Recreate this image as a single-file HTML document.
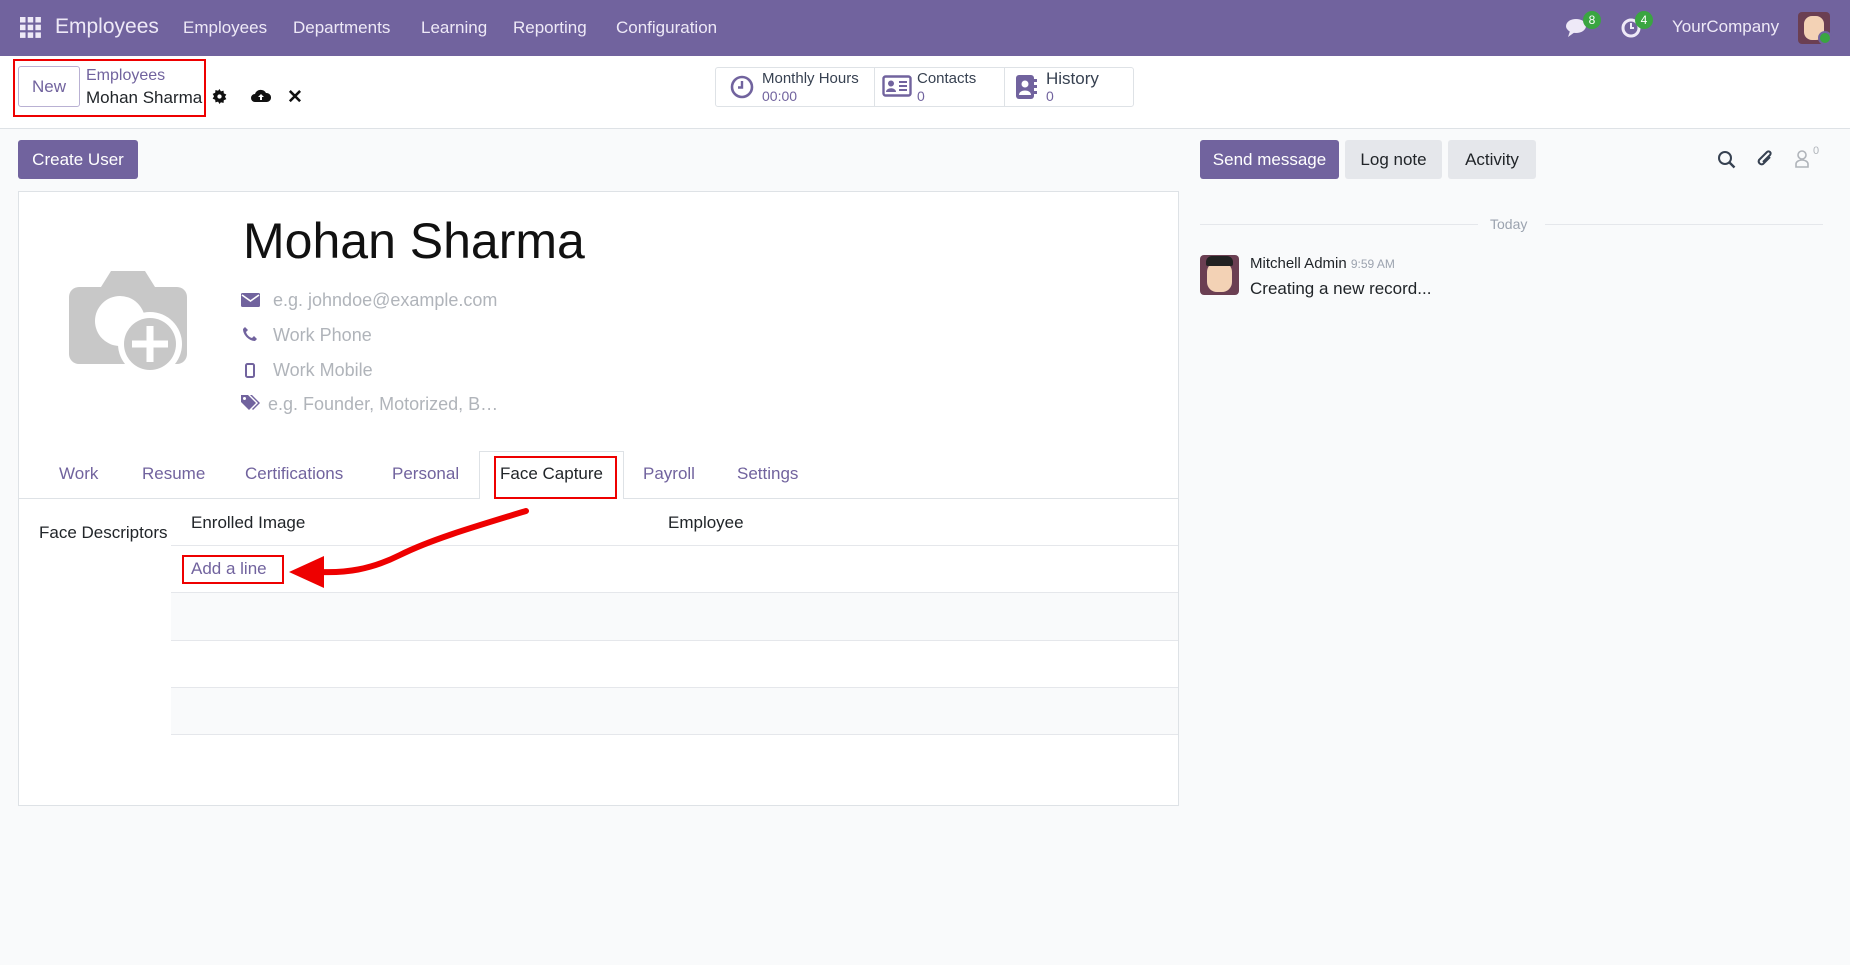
<!DOCTYPE html>
<html><head><meta charset="utf-8"><style>
*{box-sizing:border-box;margin:0;padding:0}
body{width:1850px;height:965px;overflow:hidden;background:#f9fafb;font-family:"Liberation Sans",sans-serif;color:#374151;position:relative}
.a{position:absolute;white-space:nowrap}
.nav{left:0;top:0;width:1850px;height:56px;background:#71639e}
.cp{left:0;top:56px;width:1850px;height:73px;background:#fff;border-bottom:1px solid #dee2e6}
.btn{border-radius:3px;font-size:17px;text-align:center;line-height:39px}
.muted{color:#b0b4ba;font-size:18px}
.tab{font-size:17px;color:#71639e;top:464px}
.hl{height:1px;background:#e5e7eb}
.purple{color:#71639e}
</style></head><body>
<div class="a nav"></div>
<svg class="a" style="left:20px;top:17px" width="21" height="21" viewBox="0 0 21 21" fill="#eee9f7"><rect x="0" y="0" width="5.5" height="5.5"/><rect x="7.7" y="0" width="5.5" height="5.5"/><rect x="15.4" y="0" width="5.5" height="5.5"/><rect x="0" y="7.7" width="5.5" height="5.5"/><rect x="7.7" y="7.7" width="5.5" height="5.5"/><rect x="15.4" y="7.7" width="5.5" height="5.5"/><rect x="0" y="15.4" width="5.5" height="5.5"/><rect x="7.7" y="15.4" width="5.5" height="5.5"/><rect x="15.4" y="15.4" width="5.5" height="5.5"/></svg>
<div class="a" style="left:55px;top:15px;font-size:21px;color:#eee9f7">Employees</div>
<div class="a" style="left:183px;top:18px;color:#eee9f7;font-size:17px">Employees</div>
<div class="a" style="left:293px;top:18px;color:#eee9f7;font-size:17px">Departments</div>
<div class="a" style="left:421px;top:18px;color:#eee9f7;font-size:17px">Learning</div>
<div class="a" style="left:513px;top:18px;color:#eee9f7;font-size:17px">Reporting</div>
<div class="a" style="left:616px;top:18px;color:#eee9f7;font-size:17px">Configuration</div>
<svg class="a" style="left:1565px;top:16px" width="26" height="22" viewBox="0 0 26 22"><ellipse cx="11" cy="10" rx="10" ry="7" fill="#eee9f7"/><path d="M5 15 L3 21 L10 16Z" fill="#eee9f7"/></svg>
<div class="a" style="left:1583px;top:11px;width:18px;height:18px;border-radius:9px;background:#3aa541;color:#fff;font-size:12px;text-align:center;line-height:18px">8</div>
<svg class="a" style="left:1620px;top:17px" width="22" height="22" viewBox="0 0 22 22"><circle cx="11" cy="11" r="8" fill="none" stroke="#eee9f7" stroke-width="3"/><path d="M11 6v5h3" stroke="#eee9f7" stroke-width="2" fill="none"/></svg>
<div class="a" style="left:1635px;top:11px;width:18px;height:18px;border-radius:9px;background:#3aa541;color:#fff;font-size:12px;text-align:center;line-height:18px">4</div>
<div class="a" style="left:1672px;top:17px;color:#eee9f7;font-size:17px">YourCompany</div>
<div class="a" style="left:1798px;top:12px;width:32px;height:32px;border-radius:4px;background:#6b3f52"></div>
<div class="a" style="left:1804px;top:16px;width:20px;height:24px;border-radius:8px;background:#f3d2b5"></div>
<div class="a" style="left:1818px;top:31px;width:14px;height:14px;border-radius:7px;background:#3aa541;border:2px solid #71639e"></div>

<div class="a cp"></div>
<div class="a" style="left:13px;top:59px;width:193px;height:58px;border:2px solid #e00"></div>
<div class="a btn" style="left:18px;top:66px;width:62px;height:41px;border:1px solid #b9b1d3;color:#71639e;line-height:39px">New</div>
<div class="a purple" style="left:86px;top:67px;font-size:16px">Employees</div>
<div class="a" style="left:86px;top:88px;font-size:17px;color:#212529">Mohan Sharma</div>
<svg class="a" style="left:212px;top:89px" width="15" height="15" viewBox="0 0 16 16"><path d="M8 0l1.5 2.5 2.8-.8.3 2.9 2.7 1.2-1.5 2.5 1.5 2.5-2.7 1.2-.3 2.9-2.8-.8L8 16l-1.5-2.5-2.8.8-.3-2.9L.7 10.2 2.2 7.7.7 5.2l2.7-1.2.3-2.9 2.8.8Z" fill="#111"/><circle cx="8" cy="8" r="2.3" fill="#fff"/></svg>
<svg class="a" style="left:251px;top:89px" width="20" height="14" viewBox="0 0 20 14"><path d="M4 13 a4 4 0 0 1 0-8 a6 6 0 0 1 11-1 a4.5 4.5 0 0 1 1 9Z" fill="#111"/><path d="M10 5 l-3 3h2v3h2v-3h2Z" fill="#fff"/></svg>
<div class="a" style="left:287px;top:86px;font-size:19px;font-weight:bold;color:#111">✕</div>

<div class="a" style="left:715px;top:67px;width:419px;height:40px;border:1px solid #dee2e6;border-radius:3px;background:#fff"></div>
<div class="a" style="left:874px;top:68px;width:1px;height:38px;background:#dee2e6"></div>
<div class="a" style="left:1004px;top:68px;width:1px;height:38px;background:#dee2e6"></div>
<svg class="a" style="left:730px;top:75px" width="24" height="24" viewBox="0 0 24 24"><circle cx="12" cy="12" r="10" fill="none" stroke="#71639e" stroke-width="2.6"/><path d="M12 6v6.5h-4" stroke="#71639e" stroke-width="2.4" fill="none"/></svg>
<div class="a" style="left:762px;top:70px;font-size:15px;color:#374151">Monthly Hours</div>
<div class="a purple" style="left:762px;top:88px;font-size:14px">00:00</div>
<svg class="a" style="left:882px;top:75px" width="30" height="24" viewBox="0 0 30 24"><rect x="1.5" y="1.5" width="27" height="19" rx="2" fill="none" stroke="#71639e" stroke-width="2.4"/><circle cx="9" cy="8.5" r="3" fill="#71639e"/><path d="M4 17c0-5 10-5 10 0Z" fill="#71639e"/><path d="M17 7h8M17 11h8M17 15h8" stroke="#71639e" stroke-width="2"/></svg>
<div class="a" style="left:917px;top:70px;font-size:15px;color:#374151">Contacts</div>
<div class="a purple" style="left:917px;top:88px;font-size:14px">0</div>
<svg class="a" style="left:1014px;top:74px" width="24" height="26" viewBox="0 0 24 26"><rect x="2" y="1" width="18" height="24" rx="3" fill="#71639e"/><rect x="20" y="5" width="3" height="3" fill="#71639e"/><rect x="20" y="11" width="3" height="3" fill="#71639e"/><rect x="20" y="17" width="3" height="3" fill="#71639e"/><circle cx="11" cy="10" r="3.5" fill="#fff"/><path d="M5 21c0-6 12-6 12 0Z" fill="#fff"/></svg>
<div class="a" style="left:1046px;top:69px;font-size:17px;color:#374151">History</div>
<div class="a purple" style="left:1046px;top:88px;font-size:14px">0</div>

<div class="a btn" style="left:18px;top:140px;width:120px;height:39px;background:#71639e;color:#fff">Create User</div>
<div class="a" style="left:18px;top:191px;width:1161px;height:615px;background:#fff;border:1px solid #dee2e6"></div>
<div class="a" style="left:243px;top:212px;font-size:50px;color:#111">Mohan Sharma</div>
<svg class="a" style="left:65px;top:269px" width="126" height="110" viewBox="0 0 126 110"><path d="M4 28 a10 10 0 0 1 10-10 h22 l10-16 h34 l10 16 h22 a10 10 0 0 1 10 10 v57 a10 10 0 0 1 -10 10 h-98 a10 10 0 0 1 -10-10Z" fill="#c8c8c8"/><circle cx="55" cy="52" r="25" fill="#fff"/><circle cx="85" cy="75" r="32" fill="#fff"/><circle cx="85" cy="75" r="26" fill="#c8c8c8"/><path d="M85 57v36M67 75h36" stroke="#fff" stroke-width="7"/></svg>
<svg class="a" style="left:241px;top:293px" width="19" height="14" viewBox="0 0 19 14"><rect width="19" height="14" rx="1.5" fill="#71639e"/><path d="M1 2l8.5 6 8.5-6" stroke="#fff" stroke-width="1.6" fill="none"/></svg>
<div class="a muted" style="left:273px;top:290px">e.g. johndoe@example.com</div>
<svg class="a" style="left:242px;top:326px" width="16" height="16" viewBox="0 0 16 16"><path d="M3 1l3 3-2 2c1 3 3 5 6 6l2-2 3 3-2 2C7 15 1 9 1 3Z" fill="#71639e"/></svg>
<div class="a muted" style="left:273px;top:325px">Work Phone</div>
<svg class="a" style="left:245px;top:363px" width="10" height="15" viewBox="0 0 10 15"><rect x="1" y="1" width="8" height="13" rx="1.5" fill="none" stroke="#71639e" stroke-width="2"/></svg>
<div class="a muted" style="left:273px;top:360px">Work Mobile</div>
<svg class="a" style="left:240px;top:394px" width="21" height="18" viewBox="0 0 21 18"><path d="M1 1h7l8 8-7 7-8-8Z" fill="#71639e"/><path d="M10 1h2l8 8-7 7-1-1 6-6Z" fill="#71639e"/><circle cx="4.5" cy="4.5" r="1.5" fill="#fff"/></svg>
<div class="a muted" style="left:268px;top:394px">e.g. Founder, Motorized, B…</div>

<div class="a hl" style="left:19px;top:498px;width:1159px;background:#dee2e6"></div>
<div class="a" style="left:479px;top:451px;width:145px;height:48px;background:#fff;border:1px solid #dee2e6;border-bottom:none"></div>
<div class="a tab" style="left:59px">Work</div>
<div class="a tab" style="left:142px">Resume</div>
<div class="a tab" style="left:245px">Certifications</div>
<div class="a tab" style="left:392px">Personal</div>
<div class="a tab" style="left:500px;color:#212529">Face Capture</div>
<div class="a tab" style="left:643px">Payroll</div>
<div class="a tab" style="left:737px">Settings</div>
<div class="a" style="left:494px;top:456px;width:123px;height:43px;border:2px solid #e00"></div>

<div class="a" style="left:39px;top:523px;font-size:17px;color:#212529">Face Descriptors</div>
<div class="a" style="left:191px;top:513px;font-size:17px;color:#212529">Enrolled Image</div>
<div class="a" style="left:668px;top:513px;font-size:17px;color:#212529">Employee</div>
<div class="a hl" style="left:171px;top:545px;width:1007px"></div>
<div class="a" style="left:171px;top:593px;width:1007px;height:47px;background:#f9fafb"></div>
<div class="a" style="left:171px;top:688px;width:1007px;height:47px;background:#f9fafb"></div>
<div class="a hl" style="left:171px;top:592px;width:1007px"></div>
<div class="a hl" style="left:171px;top:640px;width:1007px"></div>
<div class="a hl" style="left:171px;top:687px;width:1007px"></div>
<div class="a hl" style="left:171px;top:734px;width:1007px"></div>
<div class="a purple" style="left:191px;top:559px;font-size:17px">Add a line</div>
<div class="a" style="left:182px;top:555px;width:102px;height:29px;border:2px solid #e00"></div>
<svg class="a" style="left:280px;top:500px" width="260" height="90" viewBox="0 0 260 90"><path d="M246 11 C190 28 150 40 120 55 C90 70 65 73 40 72" stroke="#e00" stroke-width="6" fill="none" stroke-linecap="round"/><path d="M9 72 L44 56 L44 88Z" fill="#e00"/></svg>

<div class="a btn" style="left:1200px;top:140px;width:139px;height:39px;background:#71639e;color:#fff">Send message</div>
<div class="a btn" style="left:1345px;top:140px;width:97px;height:39px;background:#e5e7eb;color:#212529">Log note</div>
<div class="a btn" style="left:1448px;top:140px;width:88px;height:39px;background:#e5e7eb;color:#212529">Activity</div>
<svg class="a" style="left:1717px;top:150px" width="20" height="20" viewBox="0 0 20 20"><circle cx="8" cy="8" r="6" fill="none" stroke="#374151" stroke-width="2"/><path d="M12.5 12.5l5 5" stroke="#374151" stroke-width="2.4"/></svg>
<svg class="a" style="left:1755px;top:148px" width="20" height="22" viewBox="0 0 20 22"><path d="M15 9l-7 7a3 3 0 0 1-4-4l8-8a2 2 0 0 1 3 3l-7 7" fill="none" stroke="#374151" stroke-width="2"/></svg>
<svg class="a" style="left:1794px;top:149px" width="16" height="19" viewBox="0 0 16 19"><circle cx="8" cy="6" r="4" fill="none" stroke="#b0b4ba" stroke-width="1.6"/><path d="M2 18v-3a6 4 0 0 1 12 0v3Z" fill="none" stroke="#b0b4ba" stroke-width="1.6"/></svg>
<div class="a" style="left:1813px;top:145px;font-size:11px;color:#b0b4ba">0</div>
<div class="a hl" style="left:1200px;top:224px;width:278px"></div>
<div class="a hl" style="left:1545px;top:224px;width:278px"></div>
<div class="a" style="left:1490px;top:216px;font-size:14px;color:#9ca3af">Today</div>
<div class="a" style="left:1200px;top:255px;width:39px;height:40px;border-radius:4px;background:#6b3f52"></div>
<div class="a" style="left:1207px;top:262px;width:25px;height:30px;border-radius:10px;background:#f3d2b5"></div>
<div class="a" style="left:1206px;top:256px;width:27px;height:10px;border-radius:6px 6px 2px 2px;background:#222"></div>
<div class="a" style="left:1250px;top:255px;font-size:15px;color:#212529">Mitchell Admin <span style="font-size:12px;color:#9ca3af">9:59 AM</span></div>
<div class="a" style="left:1250px;top:279px;font-size:17px;color:#212529">Creating a new record...</div>
</body></html>
